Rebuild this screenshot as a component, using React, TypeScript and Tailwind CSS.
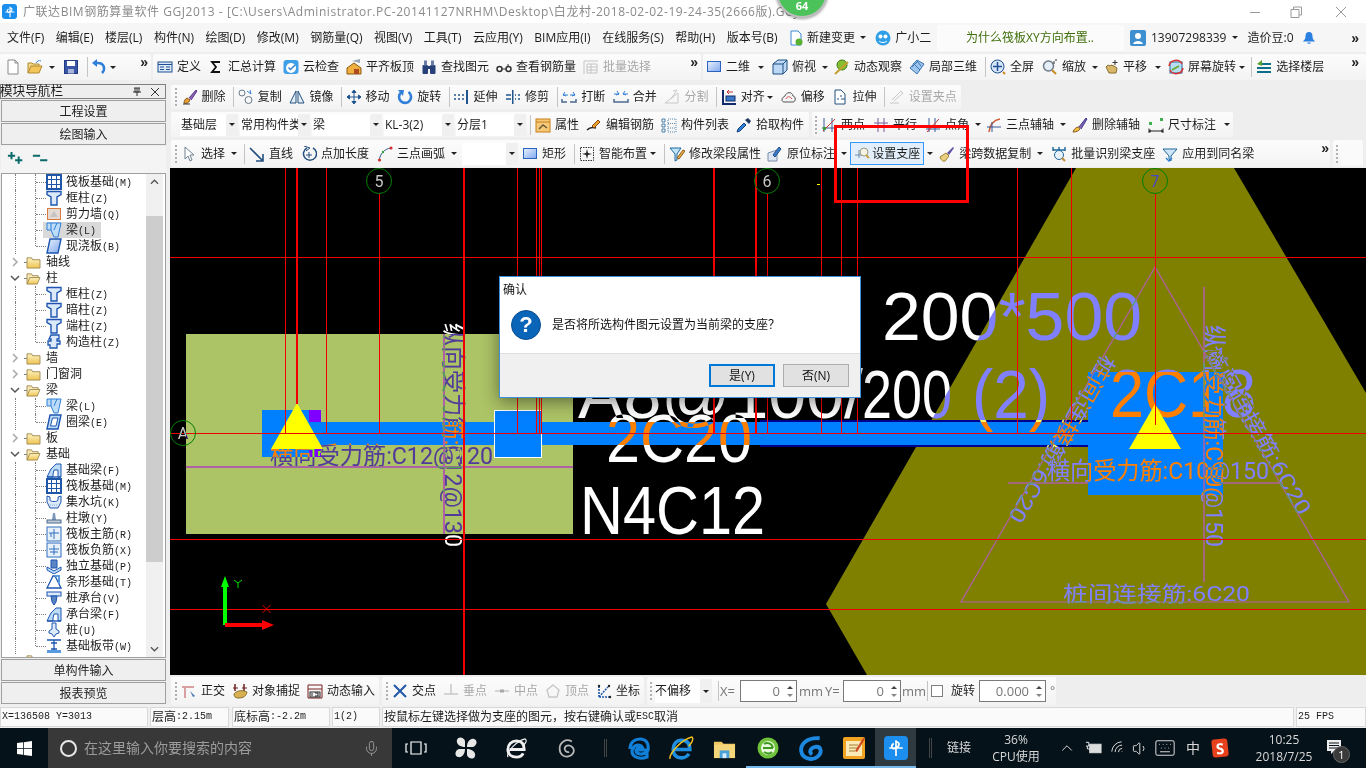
import React from "react";
import { ChevronUp, Keyboard, Mic, Volume1, Wifi } from "lucide-react";

const S = ({ children, c = "" }: { children: React.ReactNode; c?: string }) => (
  <svg viewBox="0 0 16 16" className={"w-4 h-4 shrink-0 " + c} fill="none">{children}</svg>
);

const I: Record<string, React.ReactNode> = {
  new: <S><path d="M3 1h7l3 3v11H3z" fill="#fff" stroke="#8a8a8a" /><path d="M10 1v3h3" stroke="#8a8a8a" /></S>,
  open: <S><path d="M1 14V4h4l1 1h6v2" fill="#f5d98a" stroke="#b08a30" /><path d="M1 14l3-7h11l-3 7z" fill="#f3c65a" stroke="#b08a30" /><path d="M9 4c1-2 3-3 5-2" stroke="#3c8ad8" /></S>,
  save: <S><rect x="1.5" y="1.5" width="13" height="13" fill="#3a55a8" stroke="#223a80" /><rect x="4" y="2" width="8" height="5" fill="#fff" /><rect x="5" y="10" width="6" height="4.5" fill="#a8b4d8" /></S>,
  undo: <S><path d="M11 14c4-4 2-10-4-10H4" stroke="#2f7fd8" strokeWidth="2.5" /><path d="M6 0L1 4l5 4z" fill="#2f7fd8" /></S>,
  def: <S><rect x="1" y="3" width="14" height="10" fill="#dbe8f8" stroke="#1f4f90" /><path d="M1 5.5h14M3 8h4M3 10.5h4M9 8h4M9 10.5h4" stroke="#1f4f90" /></S>,
  sum: <S><path d="M12 3H4l4 5-4 5h8" stroke="#111" strokeWidth="1.8" /></S>,
  cloud: <S><rect x="0.5" y="1" width="15" height="14" rx="3" fill="#3f9fe8" /><circle cx="8" cy="9" r="5" fill="#fff" /><path d="M5.5 8.5l2 2L12 6" stroke="#2f85d0" strokeWidth="1.5" /></S>,
  flat: <S><path d="M1 9L8 4l7 5v6H1z" fill="#f0b040" stroke="#8a5a10" /><path d="M6 2l8-2v4z" fill="#9aa8b8" /><rect x="8" y="10" width="5" height="5" fill="#b04a20" /></S>,
  bino: <S><rect x="1.5" y="6" width="5.5" height="9" rx="1" fill="#28407a" /><rect x="9" y="6" width="5.5" height="9" rx="1" fill="#28407a" /><rect x="3" y="1.5" width="3" height="5" fill="#6a7ea8" /><rect x="10" y="1.5" width="3" height="5" fill="#6a7ea8" /><rect x="6" y="7" width="4" height="3" fill="#28407a" /></S>,
  glass: <S><circle cx="3.5" cy="10" r="2.5" stroke="#333" strokeWidth="1.5" /><circle cx="12.5" cy="10" r="2.5" stroke="#333" strokeWidth="1.5" /><path d="M6 10h4M12 8V5" stroke="#333" /></S>,
  batch: <S><path d="M1 2h14M1 2v13M4 5h10v9H4zM4 8h10M4 11h10M8 5v9" stroke="#c4c4c4" /></S>,
  rect: <S><rect x="1.5" y="2.5" width="13" height="10" fill="url(#gb)" stroke="#2a62c0" /></S>,
  cube: <S><path d="M1 5l5-4h9v10l-4 4H1z" fill="#bcd8f4" stroke="#1d4f80" /><path d="M1 5h10v10M11 5l4-4" stroke="#1d4f80" /></S>,
  orbit: <S><circle cx="8" cy="6" r="5" fill="#86c030" stroke="#3e7a18" /><path d="M1 15L14 3" stroke="#c4a030" strokeWidth="2" /></S>,
  local: <S><path d="M8 1l7 4-7 10-7-6z" fill="#9cc4ec" stroke="#3a74b0" /><path d="M4 4l7 7M8 2l4 5M3 8l5-5" stroke="#3a74b0" /></S>,
  full: <S><circle cx="7.5" cy="7.5" r="6.5" fill="#d6e6f8" stroke="#1f4f90" /><path d="M7.5 3v9M3 7.5h9" stroke="#1f4f90" strokeWidth="1.5" /><path d="M13 13l2 2" stroke="#c88a20" strokeWidth="2" /></S>,
  zoom: <S><circle cx="6.5" cy="7" r="5" fill="#e3eef8" stroke="#707a88" strokeWidth="1.5" /><path d="M10 11l4 4" stroke="#c88a20" strokeWidth="2" /><path d="M12 2v3M13 1h2" stroke="#333" /></S>,
  hand: <S><path d="M3 8l2-2 2 1 1-1 3 1 3 2-1 5H6z" fill="#d8b868" stroke="#8a7030" /><path d="M12 1v5M9.5 3.5h5" stroke="#333" /></S>,
  rotate: <S><rect x="2" y="3" width="12" height="11" fill="#b4dcf4" stroke="#2a6aa0" /><path d="M4 11l7-4" stroke="#6aa830" strokeWidth="2" /><path d="M1 7a7 7 0 0 1 13-2M15 9a7 7 0 0 1-13 2" stroke="#d83030" strokeWidth="1.5" /></S>,
  floor: <S><path d="M4 5h11M1 9h14M1 13h14" stroke="#0f6f8a" strokeWidth="2" /><path d="M6 1L1 5l5 2z" fill="#5aa030" /></S>,
  brush: <S><path d="M2 14c2 1 5 0 6-3l-3-2c-2 1-3 3-3 5z" fill="#e8a030" stroke="#8a5a20" /><path d="M7 9l7-8 1 1-6 9" fill="#8a60b0" stroke="#5a3a90" /><path d="M1 15h7" stroke="#333" /></S>,
  copy: <S><circle cx="4" cy="4" r="3" stroke="#6a7a8a" /><circle cx="10.5" cy="11" r="3.5" stroke="#6a7a8a" /><path d="M9 2l4 3-1-4" stroke="#2f7fd8" /></S>,
  mirror: <S><path d="M7 2v12H1zM9 2v12h6z" stroke="#24507f" fill="#e4eef8" /></S>,
  move: <S><path d="M8 1v14M1 8h14M8 1L6 3.5h4zM8 15l-2-2.5h4zM1 8l2.5-2v4zM15 8l-2.5-2v4z" stroke="#20558f" fill="#20558f" /></S>,
  turn: <S><path d="M11.5 3A6 6 0 1 1 4 3.5" stroke="#2f7fd8" strokeWidth="2.6" /><path d="M1 1l6 0-1 6z" fill="#2f7fd8" /></S>,
  extend: <S><path d="M1 6h2M5 6h2M9 6h2M1 10h2M5 10h2M9 10h2" stroke="#20558f" strokeWidth="1.5" /><rect x="13" y="1" width="2" height="14" fill="#20558f" /></S>,
  trim: <S><path d="M1 6h5M1 10h5M10 6h1M10 10h1M13 6h2M13 10h2" stroke="#20558f" strokeWidth="1.5" /><rect x="7" y="1" width="1.5" height="14" fill="#20558f" /></S>,
  brk: <S><path d="M2 6h5M9 6h5M4 3L2 6l3 1M12 3l2 3-3 1" stroke="#2f7fd8" /><path d="M1 10v3h5M15 10v3H9" stroke="#4a6a90" strokeWidth="1.5" /></S>,
  merge: <S><path d="M1 5h5M10 5h5M4 2l2 3-3 1M12 2l-2 3 3 1" stroke="#2f7fd8" /><path d="M1 10v3h14v-3" stroke="#4a6a90" strokeWidth="1.5" /></S>,
  split: <S><path d="M1 14h13V4L1 14zM9 2l4-1-6 9" stroke="#c8c8c8" /></S>,
  align: <S><path d="M2 1v14h13" stroke="#122a6a" strokeWidth="2" /><rect x="5" y="7" width="9" height="5" fill="#3a78c8" stroke="#122a6a" /><path d="M12 3H6M8 1L6 3l2 2" stroke="#c03030" /></S>,
  offset: <S><path d="M1 11c0-3 2-3 3-4 1-4 7-5 8 0 3 0 3 6 0 6H3c-1 0-2-1-2-2z" fill="#f4f4f4" stroke="#555" /><path d="M5 10c1-3 4-3 6 0" stroke="#d85050" /></S>,
  stretch: <S><path d="M3 1h6l4 4v10H3z" stroke="#24507f" fill="#fff" /><path d="M5 10h2M9 10h4M9 6v2" stroke="#24507f" /></S>,
  grip2: <S><path d="M1 14h9M3 11l9-9 2 2-9 8" stroke="#c8c8c8" /></S>,
  prop: <S><rect x="1" y="2" width="14" height="13" fill="#f6c978" stroke="#c87f18" /><path d="M1 5h14" stroke="#c87f18" /><path d="M4 12l4-4 4 3" stroke="#6a5a3a" strokeWidth="1.5" /></S>,
  pen: <S><path d="M1 13c3-3 6-3 9-2" stroke="#222" strokeWidth="1.6" /><path d="M6 9l6-6 2 2-6 6z" fill="#e8a030" stroke="#8a4a10" /></S>,
  list: <S><path d="M1 2h3v3H1zM1 7h3v3H1zM1 12h3v3H1z" stroke="#4a7fa8" /><path d="M7 2h8v13H7zM7 6.5h8M7 11h8" stroke="#5a8ab0" strokeDasharray="1 1" /></S>,
  drop: <S><path d="M1 15l1-3 6-6 2 2-6 6z" fill="#2f7fd8" stroke="#16447a" /><path d="M9 3l3-2 3 3-2 3z" fill="#223a60" /></S>,
  two: <S><path d="M3 1v14M11 1v14M1 11h14" stroke="#3a5a98" /><path d="M2 14L14 2" stroke="#d03030" /><rect x="2" y="10" width="3" height="3" fill="#3da03d" /></S>,
  par: <S><path d="M5 1v14M11 1v14M1 6h14M1 10h14" stroke="#7a5a9a" /></S>,
  ang: <S><path d="M4 1v14M10 1v14M1 12h14" stroke="#3a5a98" /><path d="M2 15L14 2" stroke="#d03030" /></S>,
  arc: <S><path d="M3 15C4 7 8 3 14 2" stroke="#d05a30" strokeWidth="1.5" /><path d="M6 5v10M1 10h14" stroke="#3a5a98" /></S>,
  del: <S><path d="M1 15c1-3 3-5 6-5l1 2c-1 2-4 3-7 3z" fill="#f0c040" stroke="#8a5a20" /><path d="M7 10l7-9 1 1-6 10" fill="#8a60b0" stroke="#3a3a90" /></S>,
  dim: <S><rect x="1" y="5" width="3" height="3" fill="#3fb050" /><rect x="12" y="1" width="3" height="3" fill="#3fb050" /><path d="M1 14h14M1 11.5v5M15 11.5v5M3 13l-2 1 2 1M13 13l2 1-2 1" stroke="#222" /></S>,
  cursor: <S><path d="M4 1l0 12 3-3 2 5 2-1-2-5h4z" fill="#fff" stroke="#708090" /></S>,
  line: <S><path d="M1 2l13 13M14 8v7H7" stroke="#24507f" strokeWidth="1.6" /></S>,
  plen: <S><path d="M6 2a6.5 6.5 0 1 0 6 0" stroke="#24507f" strokeWidth="1.5" /><path d="M3 0l6 2-4 3M8 6v6M5 9h6" stroke="#24507f" /></S>,
  arc3: <S><path d="M2 15C3 8 7 3 14 2" stroke="#2a5a90" /><circle cx="2.5" cy="14" r="1.6" fill="#d03030" /><circle cx="14" cy="2" r="1.6" fill="#d03030" /><circle cx="6" cy="6" r="1.2" fill="#3da03d" /></S>,
  smart: <S><rect x="1.5" y="1.5" width="13" height="13" stroke="#333" strokeDasharray="1.5 1" /><path d="M8 3l1 4 4 1-4 1-1 4-1-4-4-1 4-1z" fill="#222" /></S>,
  funnel: <S><path d="M1 2h11L8 8v6l-2 1V8z" fill="#bfe3f7" stroke="#20689a" /><path d="M8 12l6-8 2 1-6 8z" fill="#e8b040" stroke="#8a5a20" /></S>,
  place: <S><path d="M1 7l9-3v11H1z" fill="#dbe6f2" stroke="#7a90a8" /><path d="M6 9l6-8 2 2-6 8z" fill="#3a78c8" stroke="#20508a" /></S>,
  support: <S><path d="M1 9h7M5 4v8" stroke="#6a8aa8" /><circle cx="10" cy="6" r="4" fill="#f4f4e4" stroke="#a09a80" /><path d="M12 9l3 3" stroke="#c8a040" strokeWidth="2" /></S>,
  broom: <S><path d="M1 11l6-4 3 3-4 5c-2 1-4-1-5-4z" fill="#e8d080" stroke="#a08030" /><path d="M8 7l6-6 1 1-5 7" fill="#6050a0" /></S>,
  scan: <S><path d="M2 4h12M2 1v4M8 1v4M14 1v4" stroke="#20689a" strokeWidth="1.4" /><circle cx="8" cy="9" r="4.5" fill="#e8f2fa" stroke="#20689a" /><path d="M11 12l3 3" stroke="#c08a30" strokeWidth="2" /></S>,
  apply: <S><path d="M1 3h14l-6 7v5l-2-2v-3z" fill="#cfe6f8" stroke="#20689a" /><path d="M4 12l3 3 3-3" stroke="#2f7fd8" strokeWidth="1.4" /></S>,
  ortho: <S><path d="M1 3h12v2H5v10H3V5H1z" fill="#d8a0a0" /><path d="M9 8l5 5-2 1z" fill="#4a78b0" /></S>,
  snap: <S><path d="M3 1v7M12 1v7" stroke="#6a1f1f" strokeWidth="1.5" /><path d="M1 5h5M10 5h5" stroke="#6a1f1f" /><path d="M2 11c3-4 9-4 13-2-1 4-3 6-9 6-3 0-4-2-4-4z" fill="#d8b050" stroke="#8a7030" /></S>,
  dyn: <S><path d="M1 2h14v13H1zM1 6h14" stroke="#7a2020" /><rect x="3" y="9" width="10" height="5" stroke="#222" /><path d="M5 10v3M8 10h3v3H8" stroke="#222" /></S>,
  cross: <S><path d="M2 2l12 12M14 2L2 14" stroke="#1f57a8" strokeWidth="2" /></S>,
  foot: <S><path d="M1 11h14M8 1v10" stroke="#c8c8c8" strokeWidth="1.5" /></S>,
  mid: <S><path d="M1 8h14" stroke="#c8c8c8" strokeWidth="1.5" /><rect x="6" y="6.5" width="4" height="3" fill="#a8a8a8" /></S>,
  vertex: <S><path d="M8 2l6 5-2 7H4L2 7z" stroke="#c8c8c8" strokeWidth="1.4" /></S>,
  coord: <S><path d="M3 14h11M3 14V3M3 14l9-10" stroke="#1f57a8" strokeWidth="1.6" strokeDasharray="2 1" /><circle cx="3" cy="3" r="1.2" fill="#222" /><circle cx="13" cy="3" r="1.2" fill="#222" /><circle cx="14" cy="14" r="1.2" fill="#222" /></S>,
  mat: <S><path d="M1 1h14v14H1z" stroke="#1f57a8" strokeWidth="2" /><path d="M1 5.5h14M1 10.5h14M5.5 1v14M10.5 1v14" stroke="#1f57a8" /></S>,
  col: <S><path d="M1 1.5h14v3L11 7v8H5V7L1 4.5z" fill="#dbe9fb" stroke="#1d55b0" strokeWidth="1.4" /></S>,
  wall: <S><rect x="1.5" y="2.5" width="13" height="11" fill="#e4dcd4" stroke="#d87a40" /><path d="M4 11l4-6 4 6" fill="#c4c4c4" /></S>,
  beam: <S><path d="M1 1h14l-3 14H8L5 8H1z" fill="#bcdcf8" stroke="#2f7fd8" /><path d="M5 1v7M11 1l-3 7" stroke="#2f7fd8" /></S>,
  slab: <S><path d="M4 1h11l-3 14H1z" fill="url(#gb)" stroke="#1d55b0" strokeWidth="1.4" /></S>,
  gzz: <S><path d="M5 1h8v4h-2v2h3v3h-3v4H4v-3H2V7h3V5H3z" fill="#dbe9fb" stroke="#1d55b0" strokeWidth="1.3" /></S>,
  ring: <S><path d="M4 1h11l-3 14H1z" fill="#bcdcf8" stroke="#1d55b0" strokeWidth="1.4" /><path d="M6.5 4h5.5l-2 8H4.5z" fill="#fff" stroke="#1d55b0" /></S>,
  fbeam: <S><path d="M1 15l4-8 5-5h5v13h-3V8H8l-1 4v3z" fill="#bcdcf8" stroke="#1d55b0" /><path d="M1 15h14" stroke="#1d55b0" strokeWidth="1.4" /></S>,
  pit: <S><path d="M1 2l3 1v3c0 2 8 2 8 0V3l3-1v6l-3 6H4L1 8z" fill="#dbe9fb" stroke="#1d55b0" /><path d="M4 11h8" stroke="#7ab0e8" strokeDasharray="1 1" /></S>,
  pier: <S><path d="M7 3h2l1 7H6z" fill="#7e96bc" /><rect x="1" y="10" width="14" height="3" fill="#c4ccd8" stroke="#4a6a90" /></S>,
  mr: <S><rect x="1" y="1" width="14" height="14" fill="#e8f0fa" stroke="#2f6fc0" /><path d="M3 7h10M8 3v10M5 7v4" stroke="#2f6fc0" /></S>,
  mn: <S><rect x="1" y="1" width="14" height="14" fill="#e8f0fa" stroke="#2f6fc0" /><path d="M3 7h10M8 3v10M4 10h8" stroke="#2f6fc0" /></S>,
  iso: <S><path d="M1 9l7 4 7-4v3l-7 4-7-4z" fill="#bcdcf8" stroke="#1d55b0" /><path d="M5 2h6v8H5z" fill="#5a84c4" stroke="#1d55b0" /></S>,
  strip: <S><path d="M1 14l3-6 3-6h2l3 6 3 6H1z" fill="#fff" stroke="#1d55b0" strokeWidth="1.3" /><path d="M9 2l4 0v8" stroke="#5a9ae0" strokeWidth="2" /></S>,
  cap: <S><rect x="1" y="2" width="14" height="4" fill="#dbe9fb" stroke="#1d55b0" /><path d="M5 6h6l-1 6-2 3-2-3z" fill="#5a84c4" stroke="#1d55b0" /></S>,
  pile: <S><path d="M6 1h4v6l3 2v2l-3 1-2 3-2-3-3-1V9l3-2z" fill="#dbe9fb" stroke="#1d55b0" /></S>,
  band: <S><path d="M1 2h14M1 14h14M8 2v12M5 5h6M5 11h6" stroke="#1d55b0" strokeWidth="1.3" /><rect x="1" y="12" width="14" height="3" fill="#5a9ae0" /></S>,
  fold: <svg viewBox="0 0 16 14" className="w-[15px] h-[13px] shrink-0"><path d="M1 13V2h5l1 2h8v9z" fill="url(#gy)" stroke="#a08a50" /></svg>,
  fopen: <svg viewBox="0 0 16 14" className="w-[15px] h-[13px] shrink-0"><path d="M1 13V2h5l1 2h6v2" fill="#f8e8b8" stroke="#a08a50" /><path d="M1 13l3-7h11l-3 7z" fill="url(#gy)" stroke="#a08a50" /></svg>,
};

const Sim = ({ t }: { t: string }) => (
  <>
    {t.split(/([\x00-\x7f]+)/).map((p, i) =>
      /^[\x00-\x7f]+$/.test(p) ? (
        <span key={i} className="[font-family:'Liberation_Mono',monospace] text-[10px]">{p}</span>
      ) : (
        p
      )
    )}
  </>
);

const Arrow = ({ c = "" }: { c?: string }) => (
  <span className={"w-[6px] h-[3px] shrink-0 border-x-[3px] border-t-[3px] border-x-transparent border-t-[#222] " + c} />
);
const Sep = ({ c = "-mr-1" }: { c?: string }) => <span className={"w-px h-[20px] shrink-0 bg-[#c4c4c4] " + c} />;
const Grip = ({ c = "" }: { c?: string }) => (
  <span className={"w-[2px] h-[18px] shrink-0 border-l-2 border-dotted border-[#b0b0b0] " + c} />
);
const More = ({ c = "" }: { c?: string }) => (
  <span className={"self-start mt-[1px] text-[14px] leading-[14px] font-bold text-[#222] [font-family:'Liberation_Sans',sans-serif] " + c}>»</span>
);
const T = ({ i, t, dim, c = "" }: { i: string; t: string; dim?: boolean; c?: string }) => (
  <div className={"flex items-center shrink-0 " + c}>
    {I[i]}
    <span className={"ml-1 whitespace-nowrap " + (dim ? "text-[#a8a8a8]" : "")}>{t}</span>
  </div>
);
const barCls = "flex items-center rounded-[2px] bg-linear-to-b from-[#fcfcfc] to-[#f3f3f3] shrink-0";

const Sel = ({ t, w }: { t?: string; w: string }) => (
  <div className={"flex h-[22px] shrink-0 " + w}>
    <div className="flex-1 bg-white pl-[1px] flex items-center overflow-hidden whitespace-nowrap">{t}</div>
    <div className="w-[12px] bg-[#f0f0f0] flex items-center justify-center"><Arrow /></div>
  </div>
);

const TitleBar = () => (
  <div className="h-[23px] bg-white flex items-center relative shrink-0">
    <div className="ml-[2px] w-[15px] h-[15px] rounded-[3px] bg-[#1c8fee] flex items-center justify-center">
      <svg viewBox="0 0 16 16" className="w-3 h-3" fill="none"><path d="M8 1v14M2 8h12M8 3c3-1 4 3 0 5M8 8c-4 2-5-2-2-4" stroke="#fff" strokeWidth="1.5" /></svg>
    </div>
    <span className="ml-[6px] text-[#8a8a8a] text-[12px] whitespace-nowrap tracking-[0.55px]">
      广联达BIM钢筋算量软件 GGJ2013 - [C:\Users\Administrator.PC-20141127NRHM\Desktop\白龙村-2018-02-02-19-24-35(2666版).GGJ12
    </span>
    <svg viewBox="0 0 110 14" className="ml-auto w-[110px] h-[14px] text-[#9a9a9a]" fill="none">
      <path d="M0 7.5h10M41 4.5h8v8h-8zM43.5 4.5V2h8v8h-2.5M86 2l10 10M96 2L86 12" stroke="currentColor" />
    </svg>
    <span className="w-[6px]" />
  </div>
);

const MenuBar = () => (
  <div className="h-[29px] flex items-center bg-[#f6f6f6] shrink-0 pl-[7px]">
    <div className="flex items-center gap-[11.5px] w-[930px] shrink-0">
      {["文件(F)", "编辑(E)", "楼层(L)", "构件(N)", "绘图(D)", "修改(M)", "钢筋量(Q)", "视图(V)", "工具(T)", "云应用(Y)", "BIM应用(I)", "在线服务(S)", "帮助(H)", "版本号(B)"].map((m) => (
        <span key={m} className="whitespace-nowrap shrink-0">{m}</span>
      ))}
      <div className="flex items-center ml-[-1px] shrink-0">
        <svg viewBox="0 0 16 16" className="w-4 h-4" fill="none"><path d="M3 1h7l3 3v11H3z" fill="#fff" stroke="#3a8ad8" /><circle cx="11" cy="12" r="3.5" fill="#5ab030" /></svg>
        <span className="ml-[3px] whitespace-nowrap">新建变更</span>
      </div>
      <Arrow c="-ml-[7px] -mr-[2px]" />
      <div className="flex items-center gap-[4px] shrink-0">
        <svg viewBox="0 0 16 16" className="w-4 h-4"><circle cx="8" cy="8" r="7.5" fill="#2f9fe8" /><circle cx="5.5" cy="6.5" r="2" fill="#fff" /><circle cx="10.5" cy="6.5" r="2" fill="#fff" /><path d="M4 11c2 2 6 2 8 0" stroke="#fff" fill="none" /></svg>
        <span className="whitespace-nowrap">广小二</span>
      </div>
    </div>
    <div className="w-[187px] h-[26px] rounded-t-[3px] bg-[#fbfbfb] flex items-center pl-[29px] text-[#3f6f0a] whitespace-nowrap shrink-0">为什么筏板XY方向布置..</div>
    <div className="flex items-center ml-[6px] flex-1">
      <svg viewBox="0 0 16 16" className="w-4 h-4"><rect width="16" height="16" rx="2" fill="#3d8fd0" /><circle cx="8" cy="6" r="3" fill="#fff" /><path d="M3 14c1-4 9-4 10 0z" fill="#fff" /></svg>
      <span className="ml-[5px]">13907298339</span>
      <Arrow c="ml-[6px]" />
      <span className="ml-[9px] text-[12px]">造价豆:0</span>
      <svg viewBox="0 0 16 16" className="w-[14px] h-[14px] ml-[8px]"><path d="M8 1c3 0 4 2 4 5 0 3 1 4 3 6H1c2-2 3-3 3-6 0-3 1-5 4-5z" fill="#2a7fe0" /><path d="M6 13c0 2 4 2 4 0z" fill="#2a7fe0" /></svg>
      <More c="ml-auto mr-[7px]" />
    </div>
  </div>
);

const Row1 = () => (
  <div className="h-[32px] pt-[2px] flex gap-[2px] shrink-0 bg-[#eeeeee]">
    <div className={barCls + " w-[151px] h-[26px] pl-[5px] gap-[6px]"}>
      {I.new}{I.open}<Arrow /><span className="ml-[2px]">{I.save}</span><Sep c="-mr-[3px] ml-[2px]" />{I.undo}<Arrow c="-ml-[3px]" /><More c="ml-auto mr-[3px]" />
    </div>
    <div className={barCls + " w-[548px] h-[26px] pl-[4px] gap-[7px]"}>
      <T i="def" t="定义" />
      <T i="sum" t="汇总计算" />
      <T i="cloud" t="云检查" />
      <T i="flat" t="平齐板顶" />
      <T i="bino" t="查找图元" />
      <T i="glass" t="查看钢筋量" />
      <T i="batch" t="批量选择" dim />
      <More c="ml-auto mr-[3px]" />
    </div>
    <div className={barCls + " flex-1 h-[26px] pl-[3px] gap-2"}>
      <T i="rect" t="二维" />
      <Arrow />
      <T i="cube" t="俯视" />
      <Arrow c="-mx-[2px]" />
      <T i="orbit" t="动态观察" />
      <T i="local" t="局部三维" c="-ml-px" />
      <Sep />
      <T i="full" t="全屏" />
      <T i="zoom" t="缩放" />
      <Arrow c="-mx-[2.5px]" />
      <T i="hand" t="平移" />
      <Arrow />
      <T i="rotate" t="屏幕旋转" c="-ml-px" />
      <Arrow c="-ml-[5px]" />
      <Sep c="-ml-[2px] -mr-[4px]" />
      <T i="floor" t="选择楼层" />
      <More c="ml-auto mr-[7px]" />
    </div>
  </div>
);

const RowA = () => (
  <div className="h-[27px] flex items-start pt-[1px] shrink-0">
    <div className={barCls + " w-[790px] h-[24px] ml-px pl-[4px] gap-[7.6px]"}>
      <Grip c="-mr-[3px]" />
      <T i="brush" t="删除" />
      <Sep />
      <T i="copy" t="复制" />
      <T i="mirror" t="镜像" />
      <Sep />
      <T i="move" t="移动" />
      <T i="turn" t="旋转" />
      <Sep />
      <T i="extend" t="延伸" />
      <T i="trim" t="修剪" />
      <Sep />
      <T i="brk" t="打断" />
      <T i="merge" t="合并" />
      <T i="split" t="分割" dim />
      <Sep />
      <T i="align" t="对齐" />
      <Arrow c="-ml-[5px]" />
      <T i="offset" t="偏移" />
      <T i="stretch" t="拉伸" />
      <Sep />
      <T i="grip2" t="设置夹点" dim />
    </div>
  </div>
);

const RowB = () => (
  <div className="h-[28px] flex items-start pt-[1px] gap-[3px] shrink-0">
    <div className={barCls + " w-[638px] h-[25px] ml-px pl-[9px]"}>
      <div className="flex gap-[2px]">
        <Sel t="基础层" w="w-[58px]" />
        <Sel t="常用构件类" w="w-[70px]" />
        <Sel t="梁" w="w-[70px]" />
        <Sel t="KL-3(2)" w="w-[70px]" />
        <Sel t="分层1" w="w-[70px]" />
      </div>
      <div className="flex items-center gap-[7px] ml-[4px]">
        <Sep c="-mr-[3px]" />
        <T i="prop" t="属性" />
        <T i="pen" t="编辑钢筋" />
        <T i="list" t="构件列表" />
        <T i="drop" t="拾取构件" />
      </div>
    </div>
    <div className={barCls + " w-[421px] h-[25px] pl-[3px] gap-2"}>
      <Grip c="-mr-[4px]" />
      <T i="two" t="两点" />
      <T i="par" t="平行" />
      <T i="ang" t="点角" />
      <Arrow c="-mx-[2.5px]" />
      <T i="arc" t="三点辅轴" />
      <Arrow c="-mx-[2px]" />
      <T i="del" t="删除辅轴" />
      <T i="dim" t="尺寸标注" />
      <Arrow />
    </div>
  </div>
);

const RowC = () => (
  <div className="h-[29px] flex items-start pt-[1px] gap-[3px] shrink-0">
    <div className={barCls + " w-[1159px] h-[27px] ml-px pl-[4px] gap-2"}>
      <Grip c="-mr-[4px]" />
      <T i="cursor" t="选择" />
      <Arrow c="-ml-[2px]" />
      <Sep c="-ml-px -mr-1" />
      <T i="line" t="直线" />
      <T i="plen" t="点加长度" />
      <T i="arc3" t="三点画弧" />
      <Arrow c="-ml-[2px] -mr-[3px]" />
      <Sel w="w-[56px] -mr-1" />
      <T i="rect" t="矩形" />
      <Sep />
      <T i="smart" t="智能布置" />
      <Arrow c="-ml-[5px]" />
      <Sep />
      <T i="funnel" t="修改梁段属性" />
      <T i="place" t="原位标注" c="-ml-[2px]" />
      <Arrow c="-ml-[2px] -mr-[5px]" />
      <div className="flex items-center h-[23px] border border-[#3399ff] bg-[#e2effb] px-[3px]">
        {I.support}
        <span className="ml-[2px] whitespace-nowrap">设置支座</span>
      </div>
      <Arrow c="-ml-[5px] -mr-[2px]" />
      <T i="broom" t="梁跨数据复制" />
      <Arrow c="-ml-[2px]" />
      <T i="scan" t="批量识别梁支座" />
      <T i="apply" t="应用到同名梁" c="-ml-px" />
      <More c="ml-auto mr-[1px]" />
    </div>
    <div className={barCls + " w-[30px] h-[27px] pl-[3px]"}>
      <Grip />
      <span className="ml-[3px] w-[22px] h-[22px] bg-[#fafafa]" />
    </div>
  </div>
);

const VT = ({ x, y, t, len, size, rot }: { x: number; y: number; t: string; len: number; size: number; rot: number }) => (
  <text
    transform={`translate(${x} ${y}) rotate(${rot})`}
    textLength={len}
    lengthAdjust="spacingAndGlyphs"
    fontSize={size}
    fill="#fff"
    className="mix-blend-difference"
    fontFamily="Roboto, 'Noto Sans CJK SC', sans-serif"
  >
    {t}
  </text>
);
const Big = ({ x, y, t, len, size = 68 }: { x: number; y: number; t: string; len: number; size?: number }) => (
  <text
    x={x}
    y={y}
    textLength={len}
    lengthAdjust="spacingAndGlyphs"
    fontSize={size}
    fill="#fff"
    className="mix-blend-difference"
    fontFamily="'Liberation Sans', sans-serif"
  >
    {t}
  </text>
);
const Axis = ({ x, y, t }: { x: number; y: number; t: string }) => (
  <g>
    <circle cx={x} cy={y} r={12.5} stroke="#008000" fill="none" />
    <text x={x} y={y + 6} textAnchor="middle" fontSize="16" fill="#c8c8c8" className="mix-blend-difference" fontFamily="Roboto, sans-serif">{t}</text>
  </g>
);

const Canvas = () => {
  const vs: [number, number, number, number?][] = [
    [285, 168, 433], [296, 168, 404, 2], [326, 168, 433], [379, 194, 433], [463, 168, 675, 2], [517, 168, 433],
    [536, 168, 433], [539, 168, 433], [541, 168, 433], [713, 168, 433, 2], [755, 168, 433, 2], [767, 194, 433],
    [821, 168, 433], [841, 168, 433], [857, 168, 433], [1017, 168, 433], [1071, 168, 423], [1155, 194, 425],
  ];
  return (
    <svg viewBox="170 168 1196 507" className="block w-[1196px] h-[507px]">
      <rect x="170" y="168" width="1196" height="507" fill="#000" />
      <polygon points="1076,168 1234,168 1366,393 1366,675 867,675 826,604" fill="#7f7f00" />
      <rect x="186" y="334" width="387" height="200" fill="#acc366" />
      <rect x="262" y="410" width="59" height="47" fill="#007fff" />
      <rect x="309" y="410" width="12" height="12" fill="#8000ff" />
      <rect x="309" y="449" width="12" height="8" fill="#8000ff" />
      <rect x="320" y="422" width="770" height="23" fill="#007fff" />
      <rect x="760" y="420" width="328" height="2" fill="#000090" />
      <rect x="760" y="445" width="328" height="2" fill="#000090" />
      <rect x="494.5" y="410.5" width="47" height="47" fill="#007fff" stroke="#fff" />
      <rect x="1088" y="372" width="135" height="123" fill="#007fff" />
      <path d="M186 467h387M444 334v200" stroke="#b060a5" strokeWidth="2" />
      <path d="M1008 483h80M1223 483h60M1204 287v295" stroke="#b060a5" strokeWidth="1.5" />
      <polygon points="1155,267 961,602 1349,602" fill="none" stroke="#b060a5" strokeWidth="1.2" />

      <Big x={882} y={340} t="200*500" len={260} />
      <Big x={578} y={418} t="A8@100/" len={285} />
      <Big x={862} y={418} t="200" len={90} />
      <Big x={972} y={418} t="(2)" len={78} />
      <Big x={606} y={462} t="2C20" len={146} />
      <Big x={580} y={534} t="N4C12" len={185} />
      <Big x={1110} y={417} t="2C18" len={146} />

      <VT x={270} y={464} rot={0} t="横向受力筋:C12@120" len={223} size={24} />
      <VT x={1047} y={479} rot={0} t="横向受力筋:C10@150" len={222} size={24} />
      <VT x={1063} y={601} rot={0} t="桩间连接筋:6C20" len={187} size={21} />
      <VT x={445} y={323} rot={90} t="纵向受力筋:C12@130" len={224} size={24} />
      <VT x={1206} y={325} rot={90} t="纵向受力筋:C10@150" len={222} size={24} />
      <VT x={1103} y={353} rot={120} t="桩间连接筋:6C20" len={190} size={21} />
      <VT x={1204} y={352} rot={60} t="桩间连接筋:6C20" len={190} size={21} />

      <polygon points="297,403 323,449 271,449" fill="#ffff00" />
      <polygon points="1155,404 1181,449 1129,449" fill="#ffff00" />

      <g shapeRendering="crispEdges">
        <path d="M170 257.5h1196M170 433.5h1196M170 539.5h1196M170 609.5h1196" stroke="#f00000" />
        {vs.map(([x, a, b, w]) => (
          <path key={x} d={`M${w ? x + 1 : x + 0.5} ${a}V${b}`} stroke="#f50000" strokeWidth={w ?? 1} />
        ))}
      </g>

      <Axis x={379} y={181} t="5" />
      <Axis x={767} y={181} t="6" />
      <Axis x={1155} y={181} t="7" />
      <Axis x={183} y={433} t="A" />
      <rect x="817" y="184" width="3" height="1" fill="#ffff00" />

      <path d="M225 625V584" stroke="#00ff00" strokeWidth="4" />
      <polygon points="225,576 221,587 229,587" fill="#00ff00" />
      <path d="M225 625h41" stroke="#ff0000" strokeWidth="4" />
      <polygon points="274,625 262,620 262,630" fill="#ff0000" />
      <path d="M234 580l4 3 4-3M238 583v5" stroke="#00e000" fill="none" />
      <path d="M262.5 605l8 8M270.5 605l-8 8" stroke="#e00000" />
    </svg>
  );
};

type R = { n: string; i?: string; kind: "g" | "o" | "c"; last?: boolean; sel?: boolean };
const tree: R[] = [
  { kind: "c", n: "筏板基础(M)", i: "mat" }, { kind: "c", n: "框柱(Z)", i: "col" }, { kind: "c", n: "剪力墙(Q)", i: "wall" },
  { kind: "c", n: "梁(L)", i: "beam", sel: true }, { kind: "c", n: "现浇板(B)", i: "slab", last: true },
  { kind: "g", n: "轴线" }, { kind: "o", n: "柱" },
  { kind: "c", n: "框柱(Z)", i: "col" }, { kind: "c", n: "暗柱(Z)", i: "col" }, { kind: "c", n: "端柱(Z)", i: "col" }, { kind: "c", n: "构造柱(Z)", i: "gzz", last: true },
  { kind: "g", n: "墙" }, { kind: "g", n: "门窗洞" }, { kind: "o", n: "梁" },
  { kind: "c", n: "梁(L)", i: "beam" }, { kind: "c", n: "圈梁(E)", i: "ring", last: true },
  { kind: "g", n: "板" }, { kind: "o", n: "基础" },
  { kind: "c", n: "基础梁(F)", i: "fbeam" }, { kind: "c", n: "筏板基础(M)", i: "mat" }, { kind: "c", n: "集水坑(K)", i: "pit" }, { kind: "c", n: "柱墩(Y)", i: "pier" },
  { kind: "c", n: "筏板主筋(R)", i: "mr" }, { kind: "c", n: "筏板负筋(X)", i: "mn" }, { kind: "c", n: "独立基础(P)", i: "iso" }, { kind: "c", n: "条形基础(T)", i: "strip" },
  { kind: "c", n: "桩承台(V)", i: "cap" }, { kind: "c", n: "承台梁(F)", i: "fbeam" }, { kind: "c", n: "桩(U)", i: "pile" }, { kind: "c", n: "基础板带(W)", i: "band", last: true },
];

const TreeRow = ({ r }: { r: R }) => {
  if (r.kind === "c")
    return (
      <div className="h-[16px] flex items-stretch shrink-0">
        <span className="w-[14px] border-r border-dotted border-[#808080]" />
        <span className={"w-[20px] border-r border-dotted border-[#808080] " + (r.last ? "h-[8px]" : "")} />
        <span className="w-[10px] self-center border-t border-dotted border-[#808080]" />
        <span className={"flex items-center -ml-[3px] pl-[3px] " + (r.sel ? "bg-[#d9d9d9] pr-[5px]" : "")}>
          {I[r.i!]}
          <span className="ml-[4px] whitespace-nowrap"><Sim t={r.n} /></span>
        </span>
      </div>
    );
  return (
    <div className="h-[16px] flex items-center shrink-0">
      <span className="w-[22px] flex justify-center pl-[4px]">
        {r.kind === "g" ? (
          <svg viewBox="0 0 10 10" className="w-[10px] h-[10px]" fill="none"><path d="M3 1l4 4-4 4" stroke="#a8a8a8" strokeWidth="1.5" /></svg>
        ) : (
          <svg viewBox="0 0 10 10" className="w-[10px] h-[10px]" fill="none"><path d="M1 3l4 4 4-4" stroke="#555" strokeWidth="1.5" /></svg>
        )}
      </span>
      <span className="w-[2px] self-center border-t border-dotted border-[#808080]" />
      {r.kind === "g" ? I.fold : I.fopen}
      <span className="ml-[5px] whitespace-nowrap">{r.n}</span>
    </div>
  );
};

const Btn = ({ t }: { t: string }) => (
  <div className="h-[22px] mx-px mb-px pt-[2px] border border-[#a0a0a0] bg-[#efefef] flex items-center justify-center shrink-0 text-[#222]">{t}</div>
);

const LeftPanel = () => (
  <div className="w-[170px] shrink-0 flex flex-col pr-[3px] overflow-hidden">
    <div className="h-[15px] flex items-center border border-[#808080] text-[12.6px] leading-none relative mr-px">
      <span className="-ml-px">模块导航栏</span>
      <svg viewBox="0 0 30 10" className="ml-auto w-[30px] h-[10px] mr-[4px]" fill="none"><path d="M3 1h6M6 1v3M4 1v4h4V1M2 5h8M6 5v4" stroke="#333" /><path d="M20 1l8 8M28 1l-8 8" stroke="#333" /></svg>
    </div>
    <div className="h-[1px]" />
    <Btn t="工程设置" />
    <Btn t="绘图输入" />
    <div className="h-[23px] flex items-center pl-[6px] gap-[7px] bg-[#f4f4f4] mx-px shrink-0">
      <svg viewBox="0 0 20 16" className="w-[18px] h-[15px]" fill="none"><path d="M5 2v8M1 6h8M13 7v8M9 11h8" stroke="#0a6a6a" strokeWidth="2.2" /></svg>
      <svg viewBox="0 0 20 16" className="w-[18px] h-[15px]" fill="none"><path d="M1 6h8M9 11h8" stroke="#0a6a6a" strokeWidth="2.2" /></svg>
    </div>
    <div className="h-[4px] bg-[#f4f4f4] shrink-0" />
    <div className="flex-1 min-h-0 mx-px border border-[#a0a0a0] bg-white flex overflow-hidden">
      <div className="flex-1 min-w-0 flex flex-col overflow-hidden">
        {tree.map((r, i) => <TreeRow key={i} r={r} />)}
        <div className="h-[3px] shrink-0 flex items-start pl-[24px] overflow-hidden">{I.fopen}</div>
      </div>
      <div className="w-[17px] shrink-0 bg-[#f0f0f0] flex flex-col items-center mr-[2px]">
        <div className="h-[16px] flex items-center justify-center shrink-0">
          <svg viewBox="0 0 10 6" className="w-[9px] h-[6px]" fill="none"><path d="M1 5l4-4 4 4" stroke="#555" strokeWidth="1.4" /></svg>
        </div>
        <div className="w-full h-[26px] shrink-0" />
        <div className="w-full h-[346px] bg-[#cdcdcd] shrink-0" />
        <div className="flex-1" />
        <div className="h-[16px] flex items-center justify-center shrink-0">
          <svg viewBox="0 0 10 6" className="w-[9px] h-[6px]" fill="none"><path d="M1 1l4 4 4-4" stroke="#555" strokeWidth="1.4" /></svg>
        </div>
      </div>
    </div>
    <div className="h-[1px]" />
    <Btn t="单构件输入" />
    <Btn t="报表预览" />
  </div>
);

const Spin = ({ t, w }: { t: string; w: string }) => (
  <div className={"h-[22px] border border-[#7a7a7a] bg-white flex items-center justify-end text-[#777] shrink-0 " + w}>
    <span className="text-[13px]">{t}</span>
    <span className="w-[13px] ml-[3px] h-full flex flex-col items-center justify-around py-[2px]">
      <span className="border-x-[3px] border-b-[3px] border-x-transparent border-b-[#444]" />
      <span className="border-x-[3px] border-t-[3px] border-x-transparent border-t-[#888]" />
    </span>
  </div>
);

const BottomBar = () => (
  <div className="h-[30px] flex items-start pt-[2px] gap-[3px] shrink-0">
    <div className={barCls + " w-[208px] h-[28px] ml-px pl-[4px] gap-[7px]"}>
      <Grip c="-mr-[3px]" />
      <T i="ortho" t="正交" />
      <T i="snap" t="对象捕捉" />
      <T i="dyn" t="动态输入" />
    </div>
    <div className={barCls + " w-[262px] h-[28px] pl-[4px] gap-[7px]"}>
      <Grip c="-mr-[3px]" />
      <T i="cross" t="交点" />
      <T i="foot" t="垂点" dim />
      <T i="mid" t="中点" dim />
      <T i="vertex" t="顶点" dim />
      <T i="coord" t="坐标" />
    </div>
    <div className={barCls + " w-[409px] h-[28px] pl-[3px]"}>
      <Grip />
      <div className="ml-[3px] w-[45px] h-[24px] bg-white flex items-center whitespace-nowrap shrink-0">不偏移</div>
      <div className="w-[12px] h-[24px] bg-[#f0f0f0] flex items-center justify-center shrink-0"><Arrow /></div>
      <Sep c="ml-[6px] mr-[1px]" />
      <span className="text-[#777] w-[20px] text-[13px] whitespace-nowrap">X=</span>
      <Spin t="0" w="w-[57px]" />
      <span className="text-[#777] text-[13px] ml-[2px] w-[26px]">mm</span>
      <span className="text-[#777] text-[13px] w-[18px]">Y=</span>
      <Spin t="0" w="w-[58px]" />
      <span className="text-[#777] text-[13px] ml-[1px] w-[25px]">mm</span>
      <Sep c="mr-[3px]" />
      <span className="w-[12px] h-[12px] border border-[#808080] bg-white shrink-0" />
      <span className="ml-[8px] w-[28px]">旋转</span>
      <Spin t="0.000" w="w-[67px]" />
      <span className="ml-[4px] text-[#777]">°</span>
    </div>
  </div>
);

const StatusBar = () => {
  const cell = "h-[20px] border border-[#d8d8d8] bg-[#fafafa] flex items-center pl-[1px] whitespace-nowrap shrink-0";
  return (
    <div className="h-[23px] flex items-end pb-[1px] gap-[2px] shrink-0 bg-[#f0f0f0]">
      <div className={cell + " w-[148px]"}><Sim t="X=136508 Y=3013" /></div>
      <div className={cell + " w-[79px]"}><Sim t="层高:2.15m" /></div>
      <div className={cell + " w-[98px] ml-px"}><Sim t="底标高:-2.2m" /></div>
      <div className={cell + " w-[48px]"}><Sim t="1(2)" /></div>
      <div className={cell + " w-[912px]"}><Sim t="按鼠标左键选择做为支座的图元，按右键确认或ESC取消" /></div>
      <div className={cell + " flex-1"}><Sim t="25 FPS" /></div>
    </div>
  );
};

const Slot = ({ w, children, c = "" }: { w: string; children?: React.ReactNode; c?: string }) => (
  <div className={"h-full flex items-center justify-center shrink-0 relative " + w + " " + c}>{children}</div>
);
const Under = ({ c = "" }: { c?: string }) => <span className={"absolute left-0 right-0 bottom-0 h-[2px] bg-[#76b9ed] " + c} />;

const Taskbar = () => (
  <div className="h-[40px] bg-[#06121a] flex items-center shrink-0 text-[#d8d8d8]">
    <Slot w="w-[48px]">
      <svg viewBox="0 0 16 16" className="w-[15px] h-[15px]"><path d="M0 2.2l6.5-.9v6.3H0zM7.3 1.2L16 0v7.6H7.3zM0 8.4h6.5v6.3L0 13.8zM7.3 8.4H16V16l-8.7-1.2z" fill="#fff" /></svg>
    </Slot>
    <div className="w-[344px] h-full bg-[#383838] flex items-center shrink-0">
      <span className="ml-[12px] w-[17px] h-[17px] rounded-full border-2 border-[#e8e8e8]" />
      <span className="ml-[7px] text-[14px] text-[#9c9c9c] whitespace-nowrap">在这里输入你要搜索的内容</span>
      <Mic className="ml-[111px] w-[17px] h-[17px] text-[#9c9c9c]" strokeWidth={1.3} />
    </div>
    <Slot w="w-[48px]">
      <svg viewBox="0 0 22 16" className="w-[22px] h-[16px]" fill="none"><path d="M6 2h10v12H6zM3 4H1v8h2M19 4h2v8h-2" stroke="#fff" strokeWidth="1.2" /></svg>
    </Slot>
    <Slot w="w-[51px]">
      <svg viewBox="0 0 22 22" className="w-[22px] h-[22px]" fill="#e8e8e8"><path d="M10 10C5 10 1 7 2 3s7-3 8 1zM12 10c0-5 3-9 7-8s3 7-1 8zM12 12c5 0 9 3 8 7s-7 3-8-1zM10 12c0 5-3 9-7 8s-3-7 1-8z" /></svg>
    </Slot>
    <Slot w="w-[51px]">
      <svg viewBox="0 0 24 24" className="w-[23px] h-[23px]" fill="none"><path d="M5 13h15c0-6-3-9-8-9s-9 4-9 9 4 8 9 8c3 0 6-2 7-4" stroke="#f0f0f0" strokeWidth="3" /><path d="M3 21C1 16 12 4 21 2c3 2-1 6-2 7" stroke="#f0f0f0" strokeWidth="1.2" /></svg>
    </Slot>
    <Slot w="w-[51px]">
      <svg viewBox="0 0 24 24" className="w-[21px] h-[21px]" fill="none"><path d="M17 4C10 0 3 5 3 12s5 10 10 9 8-6 5-10-8-3-9 0 2 6 5 5" stroke="#b8b8b8" strokeWidth="2" /></svg>
    </Slot>
    <Slot w="w-[24px]"><span className="w-[3px] h-[18px] border-x border-[#444]" /></Slot>
    <Slot w="w-[43px]">
      <svg viewBox="0 0 24 24" className="w-[24px] h-[24px]" fill="none"><path d="M3 13C3 6 8 3 13 3c6 0 9 4 8 11H9c0 5 7 5 11 2v5c-7 3-15 0-15-6 0-3 3-6 6-6s4 2 4 2H9" stroke="#0f7fd8" strokeWidth="3.2" /></svg>
    </Slot>
    <Slot w="w-[43px]">
      <svg viewBox="0 0 24 24" className="w-[25px] h-[25px]" fill="none"><path d="M5 13h15c0-6-3-9-8-9s-8 4-8 9 3 8 8 8c3 0 6-2 7-4" stroke="#1e8fe0" strokeWidth="3.4" /><path d="M1 22C0 16 13 3 22 1c3 3-2 7-3 9" stroke="#f0c020" strokeWidth="1.4" /></svg>
    </Slot>
    <Slot w="w-[43px]">
      <svg viewBox="0 0 24 24" className="w-[23px] h-[23px]"><path d="M1 5h8l2 2h12v3H1z" fill="#f0c860" /><path d="M1 8h22v14H1z" fill="#f5d67a" /><rect x="7" y="14" width="10" height="8" fill="#4aa0d8" /><rect x="10" y="17" width="4" height="5" fill="#d8eefa" /></svg>
    </Slot>
    <Slot w="w-[43px]">
      <svg viewBox="0 0 24 24" className="w-[24px] h-[24px]" fill="none"><circle cx="12" cy="12" r="10.5" fill="#6fc23a" /><circle cx="12" cy="12" r="7" fill="#e8f6dc" /><path d="M7 12h10M8 8c3-2 8-1 9 4M8 16c3 2 6 2 8 0" stroke="#3d9a1f" strokeWidth="2" /></svg>
      <Under />
    </Slot>
    <Slot w="w-[43px]">
      <svg viewBox="0 0 24 24" className="w-[26px] h-[26px]" fill="none"><path d="M20 3C9 2 2 8 3 15s10 9 15 5 3-10-2-9-6 5-3 7" stroke="#1c88e0" strokeWidth="3.6" /></svg>
      <Under />
    </Slot>
    <Slot w="w-[43px]">
      <svg viewBox="0 0 24 24" className="w-[24px] h-[24px]"><rect x="1" y="1" width="22" height="22" rx="2" fill="#f2a321" /><rect x="4" y="5" width="16" height="15" fill="#fbe9b8" /><path d="M7 9h9M7 12h9M7 15h6" stroke="#a08030" /><path d="M13 15L21 2l2 1-8 13z" fill="#d04a20" /></svg>
      <Under />
    </Slot>
    <Slot w="w-[41px]" c="bg-[#2f3a40]">
      <span className="w-[24px] h-[24px] rounded-[4px] bg-[#1c8fee] flex items-center justify-center">
        <svg viewBox="0 0 16 16" className="w-[18px] h-[18px]" fill="none"><path d="M8 1v14M2 8h12M8 3c3-1 4 3 0 5M8 8c-4 2-5-2-2-4" stroke="#fff" strokeWidth="1.5" /></svg>
      </span>
      <Under />
    </Slot>
    <Slot w="w-[28px]" c="justify-end"><span className="w-[3px] h-[20px] border-x border-[#444] mr-[12px]" /></Slot>
    <div className="w-[3px]" />
    <div className="w-[24px] shrink-0 whitespace-nowrap">链接</div>
    <div className="w-[17px]" />
    <div className="w-[56px] flex flex-col items-center gap-[5px] shrink-0 pt-[1px]">
      <span>36%</span>
      <span className="whitespace-nowrap">CPU使用</span>
    </div>
    <ChevronUp className="ml-[14px] w-[18px] h-[18px] shrink-0" strokeWidth={1.3} />
    <svg viewBox="0 0 18 14" className="ml-[9px] w-[17px] h-[14px] shrink-0" fill="none"><rect x="5" y="3" width="12" height="9" fill="#ddd" stroke="#ddd" /><path d="M1 1h3v4H1M2.5 5v3h3" stroke="#eee" /></svg>
    <Wifi className="ml-[8px] w-[16px] h-[16px] shrink-0 -rotate-45" strokeWidth={1.4} />
    <Volume1 className="ml-[6px] w-[17px] h-[17px] shrink-0" strokeWidth={1.4} />
    <Keyboard className="ml-[5px] w-[22px] h-[22px] shrink-0" strokeWidth={1.1} />
    <span className="ml-[10px] text-[14px] shrink-0">中</span>
    <span className="ml-[12px] w-[16px] h-[18px] rounded-[3px] bg-[#e8401c] text-white font-bold text-[15px] flex items-center justify-center shrink-0 -rotate-6">S</span>
    <div className="ml-[25px] w-[62px] flex flex-col items-center gap-[5px] shrink-0 pt-[1px]">
      <span>10:25</span>
      <span className="whitespace-nowrap">2018/7/25</span>
    </div>
    <div className="ml-[11px] w-[18px] h-[18px] relative shrink-0">
      <svg viewBox="0 0 16 16" className="w-[16px] h-[16px]"><path d="M1 1h14v11H8l-3 3v-3H1z" fill="#eee" /><path d="M3 4h10M3 6.5h10M3 9h10" stroke="#06121a" /></svg>
      <span className="absolute left-[7px] top-[7px] w-[17px] h-[17px] rounded-full bg-[#3a3a3a] border border-[#666] text-white text-[11px] flex items-center justify-center">1</span>
    </div>
  </div>
);

const Dialog = () => (
  <div className="absolute left-[499px] top-[276px] w-[362px] h-[122px] bg-white border border-[#3d8fdc] shadow-[0_4px_16px_rgba(0,0,0,0.45)] flex flex-col text-[#111]">
    <div className="h-[19px] pl-[3px] flex items-end">确认</div>
    <div className="flex-1 flex items-center pl-[11px]">
      <span className="w-[30px] h-[30px] rounded-full bg-[#0a64b8] border border-[#0a4c90] text-white text-[22px] font-bold flex items-center justify-center [font-family:'Liberation_Sans',sans-serif]">?</span>
      <span className="ml-[11px] text-[12px] whitespace-nowrap">是否将所选构件图元设置为当前梁的支座？</span>
    </div>
    <div className="h-[44px] bg-[#f0f0f0] border-t border-[#dfdfdf] flex items-center justify-end pr-[11px] gap-[8px]">
      <div className="w-[66px] h-[23px] border-2 border-[#0078d7] bg-[#e1e1e1] flex items-center justify-center">是(Y)</div>
      <div className="w-[66px] h-[23px] border border-[#adadad] bg-[#e1e1e1] flex items-center justify-center">否(N)</div>
    </div>
  </div>
);

export default function App() {
  return (
    <div className="w-[1366px] h-[768px] relative overflow-hidden flex flex-col bg-[#eeeeee] text-[12px] leading-none text-[#1c1c1c] [font-family:'Open_Sans','Noto_Sans_CJK_SC',sans-serif]">
      <svg className="absolute w-0 h-0">
        <defs>
          <linearGradient id="gb" x1="0" y1="0" x2="1" y2="1"><stop offset="0" stopColor="#eaf2fd" /><stop offset="1" stopColor="#7fa8ee" /></linearGradient>
          <linearGradient id="gy" x1="0" y1="0" x2="0" y2="1"><stop offset="0" stopColor="#fdf2c4" /><stop offset="1" stopColor="#f0c450" /></linearGradient>
        </defs>
      </svg>
      <TitleBar />
      <MenuBar />
      <Row1 />
      <div className="flex-1 min-h-0 flex">
        <LeftPanel />
        <div className="flex-1 min-w-0 flex flex-col">
          <RowA />
          <RowB />
          <RowC />
          <div className="h-[507px] shrink-0 bg-black overflow-hidden"><Canvas /></div>
          <BottomBar />
        </div>
      </div>
      <StatusBar />
      <Taskbar />

      <div className="absolute left-[776px] top-[-34px] w-[52px] h-[52px] rounded-full bg-[#4cc35a] border-2 border-[#bdbdbd] shadow-[0_1px_3px_rgba(0,0,0,0.4)] flex items-end justify-center pb-[5px] text-white font-bold text-[11px]">64</div>
      <div className="absolute left-[834px] top-[125px] w-[135px] h-[78px] border-[3px] border-[#ff0000]" />
      <Dialog />
    </div>
  );
}
